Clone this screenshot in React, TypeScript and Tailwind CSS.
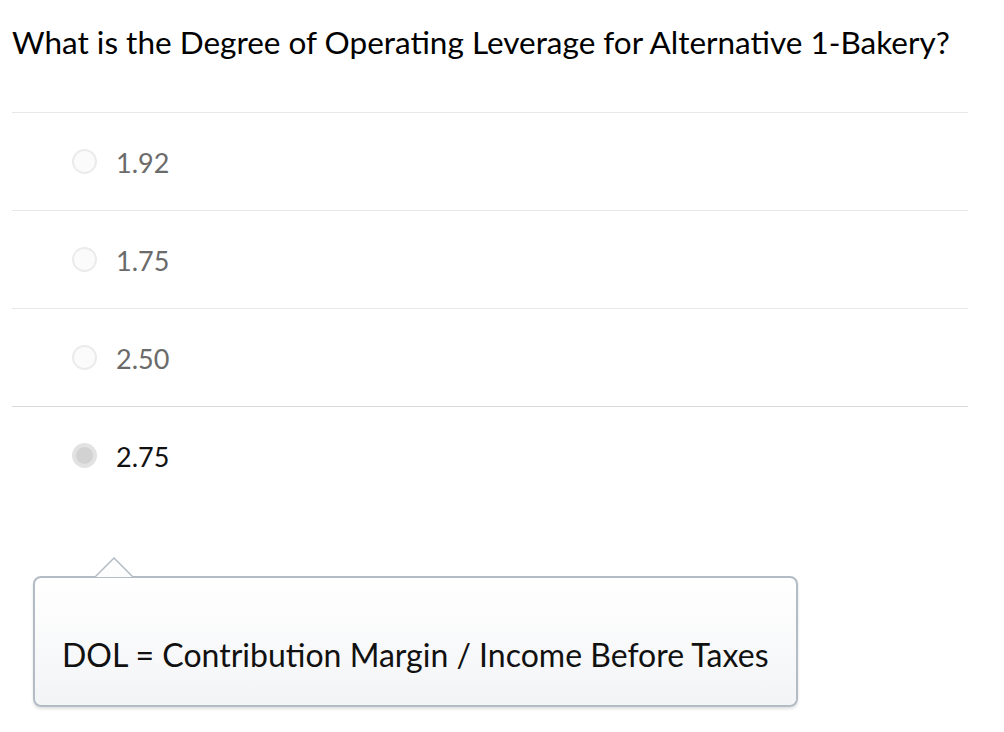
const options = [
    { label: '1.92', selected: false },
    { label: '1.75', selected: false },
    { label: '2.50', selected: false },
    { label: '2.75', selected: true },
];

const Radio = ({ selected }: { selected: boolean }) => (
    <span
        className={
            selected
                ? 'w-[25px] h-[25px] rounded-full border-[4px] border-[#e2e2e2] bg-[#d2d2d2] shrink-0'
                : 'w-[25px] h-[25px] rounded-full border-[2px] border-[#ebebeb] bg-[#fbfbfb] shrink-0'
        }
    />
);

export default function App() {
    return (
        <div className="bg-white w-[1004px] h-[732px] font-['Lato',sans-serif] text-black">
            <h1 className="pl-[12px] pt-[20px] text-[31.5px] leading-[44px] font-normal">
                What is the Degree of Operating Leverage for Alternative 1-Bakery?
            </h1>

            <div className="mt-[48px] ml-[12px] w-[956px]">
                {options.map((opt, i) => (
                    <div
                        key={opt.label}
                        className={
                            'h-[98px] flex items-center gap-[19px] pl-[60px] border-t ' +
                            (i === 3 ? 'border-[#d9d9d9]' : 'border-[#e8e8e8]')
                        }
                    >
                        <Radio selected={opt.selected} />
                        <span
                            className={
                                'text-[27px] pt-[4px] ' + (opt.selected ? 'text-[#111]' : 'text-[#6b6b6b]')
                            }
                        >
                            {opt.label}
                        </span>
                    </div>
                ))}
            </div>

            <div className="relative mt-[72px] ml-[33px] w-[765px]">
                <svg
                    className="absolute left-[62px] top-[-19px]"
                    width="38"
                    height="21"
                    viewBox="0 0 38 21"
                >
                    <path d="M0 20 L19 1 L38 20" fill="#fdfdfd" stroke="#b3bcc5" strokeWidth="1.5" />
                </svg>
                <div className="h-[131px] rounded-[8px] border-2 border-[#b3bcc5] bg-gradient-to-b from-white to-[#f3f4f6] shadow-[0_2px_3px_rgba(0,0,0,0.12)] flex items-center pl-[27px]">
                    <span className="text-[32px] text-[#111] pt-[26px]">
                        DOL = Contribution Margin / Income Before Taxes
                    </span>
                </div>
            </div>
        </div>
    );
}
